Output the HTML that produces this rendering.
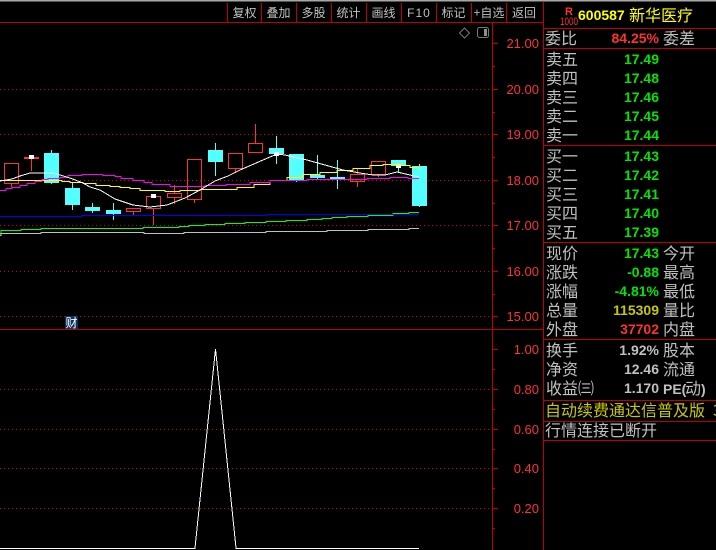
<!DOCTYPE html>
<html><head><meta charset="utf-8"><style>
html,body{margin:0;padding:0;background:#000;width:716px;height:550px;overflow:hidden}
svg{display:block}
text{font-family:"Liberation Sans","WenQuanYi Zen Hei","Noto Sans CJK SC",sans-serif}
.l text,.l{font-size:16px;fill:#c0c0c0;font-family:"WenQuanYi Zen Hei","Noto Sans CJK SC",sans-serif}
.t{font-size:12px;fill:#c0c0c0;text-anchor:middle;font-family:"WenQuanYi Zen Hei","Noto Sans CJK SC",sans-serif}
.a{font-size:13px;fill:#ff3232;text-anchor:end}
.n{font-size:14px;font-weight:bold;text-anchor:end}
.g{fill:#00e600}
</style></head><body>
<svg width="716" height="550" viewBox="0 0 716 550" xmlns="http://www.w3.org/2000/svg">
<rect width="716" height="550" fill="#000"/>
<rect width="716" height="1.5" fill="#a8a8a8"/>
<g shape-rendering="crispEdges">
<g stroke="#e00000" stroke-dasharray="1 3" stroke-width="1">
<path d="M0 89.5H492M0 134.5H492M0 180.5H492M0 225.5H492M0 271.5H492M0 316.5H492M0 389.5H492M0 429.5H492M0 468.5H492M0 508.5H492"/>
</g>
<g stroke="#c00000" stroke-width="1" fill="none">
<path d="M0 22.5H543M0 329.5H543M492.5 22V550M543.5 2V550"/>
<path d="M227.5 3V22M261.5 3V22M296.5 3V22M331.5 3V22M366.5 3V22M401.5 3V22M436.5 3V22M471.5 3V22M506.5 3V22"/>
<path d="M492 43.5H498M492 89.5H498M492 134.5H498M492 180.5H498M492 225.5H498M492 271.5H498M492 316.5H498M492 349.5H498M492 389.5H498M492 429.5H498M492 468.5H498M492 508.5H498"/>
<path d="M492 66.5H495M492 112.5H495M492 157.5H495M492 203.5H495M492 248.5H495M492 294.5H495M492 369.5H495M492 409.5H495M492 449.5H495M492 488.5H495M492 528.5H495"/>
<path d="M544 28.5H716M544 48.5H716M544 145.5H716M544 242.5H716M544 339.5H716M544 400.5H716M544 421.5H716M544 440.5H716"/>
</g>
<!-- red candles -->
<g stroke="#ff3232" fill="none">
<path d="M11.5 183V187M31.5 155V171M133.5 211V215M153.5 209V225M174.5 185V193M174.5 197V204M194.5 199V203M235.5 169V173M255.5 124V143M255.5 152V153M357.5 168V174M357.5 181V187M378.5 174V177"/>
<rect x="4.5" y="163.5" width="14" height="20"/>
<rect x="126.5" y="208.5" width="14" height="3"/>
<rect x="146.5" y="196.5" width="14" height="12"/>
<rect x="167.5" y="193.5" width="14" height="4"/>
<rect x="187.5" y="159.5" width="14" height="40"/>
<rect x="228.5" y="153.5" width="14" height="15"/>
<rect x="248.5" y="143.5" width="14" height="9"/>
<rect x="350.5" y="174.5" width="14" height="7"/>
<rect x="371.5" y="161.5" width="14" height="13"/>
</g>
<rect x="24" y="157" width="15" height="2" fill="#ff3232"/>
<!-- cyan candles -->
<g fill="#54ffff">
<rect x="44" y="153" width="15" height="30"/><rect x="51" y="150" width="1" height="34"/>
<rect x="65" y="188" width="15" height="17"/><rect x="72" y="183" width="1" height="27"/>
<rect x="85" y="207" width="15" height="4"/><rect x="92" y="203" width="1" height="10"/>
<rect x="106" y="210" width="15" height="4"/><rect x="113" y="203" width="1" height="17"/>
<rect x="208" y="150" width="15" height="12"/><rect x="215" y="143" width="1" height="33"/>
<rect x="269" y="148" width="15" height="6"/><rect x="276" y="136" width="1" height="28"/>
<rect x="289" y="154" width="15" height="26"/><rect x="296" y="154" width="1" height="28"/>
<rect x="310" y="175" width="15" height="3"/><rect x="317" y="155" width="1" height="24"/>
<rect x="330" y="177" width="15" height="2"/><rect x="337" y="160" width="1" height="29"/>
<rect x="391" y="160" width="15" height="6"/><rect x="398" y="160" width="1" height="13"/>
<rect x="412" y="166" width="15" height="40"/><rect x="419" y="164" width="1" height="43"/>
</g>
<g fill="#fff">
<rect x="29" y="155" width="5" height="4"/>
<rect x="151" y="194" width="5" height="4"/>
<rect x="274" y="152" width="5" height="4"/>
<rect x="396" y="164" width="5" height="4"/>
</g>
<!-- MAs -->
<g fill="none" stroke-width="1">
<path stroke="#00ff00" d="M0 233.5H1V230.5H21V229.5H41V228.5H143V227.5H179V226.5H189V225.5H205V224.5H225V223.5H245V222.5H266V221.5H286V220.5H307V219.5H322V218.5H332V217.5H347V216.5H368V215.5H393V213.5H409V212.5H419"/>
<path stroke="#c0c0c0" d="M0 235.5H1V233.5H41V232.5H144V233.5H184V232.5H266V231.5H327V230.5H368V229.5H409V228.5H419"/>
<path stroke="#0000ff" d="M0 216.5H82V215.5H267V214.5H419"/>
<path stroke="#ffff00" d="M0 180.5H62V181.5H70V182.5H83V183.5H96V185.5H110V186.5H120V187.5H130V188.5H140V190.5H165V191.5H180V190.5H200V189.5H237V187.5H254V184.5H270V180.5H287V177.5H303V174.5H320V172.5H337V170.5H353V168.5H370V165.5H383V164.5H397V165.5H410V167.5H419V169.5"/>
<path stroke="#ff00ff" d="M0 190.5H6V188.5H12V187.5H20V185.5H27V183.5H35V181.5H42V179.5H48V178.5H60V177.5H68V175.5H82V174.5H103V175.5H115V176.5H121V178.5H133V180.5H144V182.5H152V184.5H170V186.5H205V185.5H226V184.5H250V182.5H270V180.5H307V179.5H367V178.5H390V177.5H408V178.5H419"/>
<polyline stroke="#ffffff" points="0,181 12,179 20,176 30,173 53,173 60,175 70,178 83,183 90,187 100,190 115,199 133,205 150,207 167,205 185,198 200,190 215,181 228,176 240,170 263,160 277,154 285,155 307,160 325,165 343,170 360,173 373,175 385,175 397,172 410,175 419,177"/>
<path stroke="#ffffff" d="M0 548.5H195V548L215.5 349L236 548V548.5H419"/>
</g>
</g>
<!-- icons -->
<path d="M464.5 28L469.5 33L464.5 38L459.5 33Z" fill="none" stroke="#787878" stroke-width="1"/>
<rect x="477.5" y="27.5" width="11" height="10" rx="2" fill="#000" stroke="#787878"/>
<rect x="484" y="29" width="3" height="7" fill="#909090"/>
<rect x="65" y="316" width="13" height="13" fill="#0a3560"/>
<text x="65.5" y="327" font-size="12" fill="#fff" style='font-family:"WenQuanYi Zen Hei","Noto Sans CJK SC",sans-serif'>财</text>
<!-- toolbar -->
<text class="t" x="244.5" y="17">复权</text>
<text class="t" x="278.5" y="17">叠加</text>
<text class="t" x="313.5" y="17">多股</text>
<text class="t" x="348.5" y="17">统计</text>
<text class="t" x="383.5" y="17">画线</text>
<text class="t" x="419" y="17" style='font-family:"Liberation Sans",sans-serif' letter-spacing="1">F10</text>
<text class="t" x="453.5" y="17">标记</text>
<text class="t" x="489" y="17">+自选</text>
<text class="t" x="524" y="17">返回</text>
<!-- axis -->
<text class="a" x="539" y="48">21.00</text>
<text class="a" x="539" y="94">20.00</text>
<text class="a" x="539" y="139">19.00</text>
<text class="a" x="539" y="185">18.00</text>
<text class="a" x="539" y="230">17.00</text>
<text class="a" x="539" y="276">16.00</text>
<text class="a" x="539" y="321">15.00</text>
<text class="a" x="539" y="354">1.00</text>
<text class="a" x="539" y="394">0.80</text>
<text class="a" x="539" y="434">0.60</text>
<text class="a" x="539" y="473">0.40</text>
<text class="a" x="539" y="513">0.20</text>
<!-- header -->
<text x="565" y="15" font-size="11" font-weight="bold" fill="#ff3232">R</text>
<text x="560" y="25" font-size="11" fill="#ff3232" textLength="18" lengthAdjust="spacingAndGlyphs">1000</text>
<text x="578" y="20" font-size="14" font-weight="bold" fill="#ffff00">600587</text>
<text class="l" x="629" y="21" style="fill:#ffff00">新华医疗</text>
<g class="l">
<text x="545" y="44">委比</text><text x="663" y="44">委差</text>
<text x="546" y="65">卖五</text><text x="546" y="84">卖四</text><text x="546" y="103">卖三</text><text x="546" y="122">卖二</text><text x="546" y="141">卖一</text>
<text x="546" y="162">买一</text><text x="546" y="181">买二</text><text x="546" y="200">买三</text><text x="546" y="219">买四</text><text x="546" y="238">买五</text>
<text x="546" y="259">现价</text><text x="663" y="259">今开</text>
<text x="546" y="278">涨跌</text><text x="663" y="278">最高</text>
<text x="546" y="297">涨幅</text><text x="663" y="297">最低</text>
<text x="546" y="316">总量</text><text x="663" y="316">量比</text>
<text x="546" y="335">外盘</text><text x="663" y="335">内盘</text>
<text x="546" y="356">换手</text><text x="663" y="356">股本</text>
<text x="546" y="375">净资</text><text x="663" y="375">流通</text>
<text x="546" y="394">收益㈢</text>
<text x="663" y="394" style='font-family:"Liberation Sans",sans-serif;font-size:14px;font-weight:bold'>PE(</text>
<text x="685" y="394">动</text><text x="701" y="394" style='font-family:"Liberation Sans",sans-serif;font-size:14px;font-weight:bold'>)</text>
<text x="545" y="416" style="fill:#c8c800">自动续费通达信普及版</text>
<text x="713" y="416" style="fill:#c8c800">3</text>
<text x="545" y="436">行情连接已断开</text>
</g>
<text class="n" x="659" y="43" fill="#ff3232">84.25%</text>
<g class="n g">
<text x="659" y="64">17.49</text><text x="659" y="83">17.48</text><text x="659" y="102">17.46</text><text x="659" y="121">17.45</text><text x="659" y="140">17.44</text>
<text x="659" y="161">17.43</text><text x="659" y="180">17.42</text><text x="659" y="199">17.41</text><text x="659" y="218">17.40</text><text x="659" y="237">17.39</text>
<text x="659" y="258">17.43</text><text x="659" y="277">-0.88</text><text x="659" y="296">-4.81%</text>
</g>
<text class="n" x="659" y="315" fill="#c8c800">115309</text>
<text class="n" x="659" y="334" fill="#ff3232">37702</text>
<g class="n" fill="#c0c0c0">
<text x="659" y="355">1.92%</text><text x="659" y="374">12.46</text><text x="659" y="393">1.170</text>
</g>
</svg>
</body></html>
